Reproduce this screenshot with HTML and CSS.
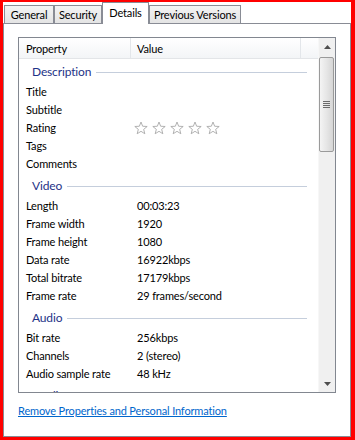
FILE: index.html
```html
<!DOCTYPE html>
<html>
<head>
<meta charset="utf-8">
<link rel="stylesheet" href="styles.css">
</head>
<body>
<div class="frame">
  <div class="tabs">
    <div class="tab t-general">General</div>
    <div class="tab t-security">Security</div>
    <div class="tab t-details active">Details</div>
    <div class="tab t-previous">Previous Versions</div>
  </div>
  <div class="panel">
    <div class="list">
      <div class="content">
        <div class="header">
          <div class="hcol h1">Property</div>
          <div class="hcol h2">Value</div>
          <div class="hcol h3"></div>
        </div>
        <div class="group"><span class="gtitle">Description</span><span class="gline"></span></div>
        <div class="row"><div class="c1">Title</div><div class="c2"></div></div>
        <div class="row"><div class="c1">Subtitle</div><div class="c2"></div></div>
        <div class="row"><div class="c1">Rating</div><div class="c2 stars">
          <svg class="star" viewBox="0 0 14 14"><path d="M7 1 L8.65 5.24 L13.18 5.49 L9.66 8.37 L10.82 12.76 L7 10.3 L3.18 12.76 L4.34 8.37 L0.82 5.49 L5.35 5.24 Z"/></svg>
          <svg class="star" viewBox="0 0 14 14"><path d="M7 1 L8.65 5.24 L13.18 5.49 L9.66 8.37 L10.82 12.76 L7 10.3 L3.18 12.76 L4.34 8.37 L0.82 5.49 L5.35 5.24 Z"/></svg>
          <svg class="star" viewBox="0 0 14 14"><path d="M7 1 L8.65 5.24 L13.18 5.49 L9.66 8.37 L10.82 12.76 L7 10.3 L3.18 12.76 L4.34 8.37 L0.82 5.49 L5.35 5.24 Z"/></svg>
          <svg class="star" viewBox="0 0 14 14"><path d="M7 1 L8.65 5.24 L13.18 5.49 L9.66 8.37 L10.82 12.76 L7 10.3 L3.18 12.76 L4.34 8.37 L0.82 5.49 L5.35 5.24 Z"/></svg>
          <svg class="star" viewBox="0 0 14 14"><path d="M7 1 L8.65 5.24 L13.18 5.49 L9.66 8.37 L10.82 12.76 L7 10.3 L3.18 12.76 L4.34 8.37 L0.82 5.49 L5.35 5.24 Z"/></svg>
        </div></div>
        <div class="row"><div class="c1">Tags</div><div class="c2"></div></div>
        <div class="row"><div class="c1">Comments</div><div class="c2"></div></div>
        <div class="group"><span class="gtitle">Video</span><span class="gline"></span></div>
        <div class="row"><div class="c1">Length</div><div class="c2">00:03:23</div></div>
        <div class="row"><div class="c1">Frame width</div><div class="c2">1920</div></div>
        <div class="row"><div class="c1">Frame height</div><div class="c2">1080</div></div>
        <div class="row"><div class="c1">Data rate</div><div class="c2">16922kbps</div></div>
        <div class="row"><div class="c1">Total bitrate</div><div class="c2">17179kbps</div></div>
        <div class="row"><div class="c1">Frame rate</div><div class="c2">29 frames/second</div></div>
        <div class="group"><span class="gtitle">Audio</span><span class="gline"></span></div>
        <div class="row"><div class="c1">Bit rate</div><div class="c2">256kbps</div></div>
        <div class="row"><div class="c1">Channels</div><div class="c2">2 (stereo)</div></div>
        <div class="row"><div class="c1">Audio sample rate</div><div class="c2">48 kHz</div></div>
        <div class="group"><span class="gtitle">Media</span><span class="gline"></span></div>
      </div>
      <div class="scrollbar">
        <div class="sbtn">
          <svg class="arrow" viewBox="0 0 7 4"><path d="M0 4 L3.5 0 L7 4 Z"/></svg>
        </div>
        <div class="thumb">
          <div class="grip"></div>
        </div>
        <div class="track"></div>
        <div class="sbtn">
          <svg class="arrow" viewBox="0 0 7 4"><path d="M0 0 L7 0 L3.5 4 Z"/></svg>
        </div>
      </div>
    </div>
    <a class="link" href="#">Remove Properties and Personal Information</a>
  </div>
</div>
</body>
</html>
```
FILE: styles.css
```css
html, body {
  margin: 0;
  padding: 0;
  background: #ffffff;
}

body {
  font-family: "Lato", "Liberation Sans", sans-serif;
  font-size: 11px;
  letter-spacing: -0.15px;
  color: #000;
}

.frame {
  width: 355px;
  height: 440px;
  box-sizing: border-box;
  border-style: solid;
  border-color: #ff0000;
  border-width: 2px 4px 3px 3px;
  display: flex;
  flex-direction: column;
  background: #fff;
}

.tabs {
  height: 21px;
  display: flex;
  align-items: flex-end;
  padding-left: 1px;
  position: relative;
  z-index: 2;
}

.tab {
  box-sizing: border-box;
  height: 18px;
  border: 1px solid #898c95;
  border-bottom: none;
  background: linear-gradient(#f3f3f3, #e4e4e4);
  text-align: center;
  line-height: 18px;
  color: #000;
  white-space: nowrap;
}

.t-general { width: 50px; }
.t-security { width: 48px; }
.t-details { width: 47px; }
.t-previous { width: 92px; }

.tab.active {
  height: 22px;
  margin-bottom: -1px;
  background: #fff;
  line-height: 20px;
}

.panel {
  flex: 1;
  border: 1px solid #898c95;
  background: #fff;
  display: flex;
  flex-direction: column;
  align-items: flex-start;
}

.list {
  margin: 13px 0 0 14px;
  width: 318px;
  height: 356px;
  box-sizing: border-box;
  border: 1px solid #828790;
  display: flex;
  overflow: hidden;
}

.content {
  width: 299px;
  overflow: hidden;
}

.header {
  height: 21px;
  display: flex;
  border-bottom: 1px solid #e3e5e8;
  background: linear-gradient(#ffffff, #f3f5f7);
  box-sizing: border-box;
}

.hcol {
  box-sizing: border-box;
  line-height: 22px;
  height: 20px;
}

.h1 {
  width: 112px;
  padding-left: 7px;
  border-right: 1px solid #e3e6ea;
}

.h2 {
  width: 170px;
  padding-left: 6px;
  border-right: 1px solid #e3e6ea;
}

.h3 {
  flex: 1;
}

.group {
  height: 24px;
  box-sizing: border-box;
  padding: 1px 0 0 13px;
  display: flex;
  align-items: center;
}

.gtitle {
  color: #1e3287;
  font-size: 12px;
}

.gline {
  flex: 1;
  height: 1px;
  background: #c5cedc;
  margin: 2px 11px 0 5px;
}

.row {
  height: 18px;
  display: flex;
  align-items: center;
  line-height: 18px;
}

.c1 {
  width: 112px;
  padding-left: 7px;
  box-sizing: border-box;
  white-space: nowrap;
}

.c2 {
  padding-left: 6px;
  white-space: nowrap;
}

.stars {
  display: flex;
  gap: 4px;
  align-items: center;
  padding-left: 3px;
}

.star {
  width: 14px;
  height: 14px;
  fill: #ffffff;
  stroke: #a9a9a9;
  stroke-width: 0.9;
  stroke-linejoin: round;
}

.scrollbar {
  width: 17px;
  display: flex;
  flex-direction: column;
  background: #f0f0f0;
  border-left: 1px solid #f7f7f7;
  box-sizing: border-box;
}

.sbtn {
  height: 17px;
  display: flex;
  align-items: center;
  justify-content: center;
}

.arrow {
  width: 7px;
  height: 4px;
  fill: #4e4e4e;
}

.thumb {
  height: 95px;
  margin: 2px 1px 0 0;
  box-sizing: border-box;
  border: 1px solid #9a9a9a;
  border-radius: 2px;
  background: linear-gradient(to right, #f4f4f4, #e6e6e6 50%, #d6d6d6);
  display: flex;
  align-items: center;
  justify-content: center;
}

.grip {
  width: 7px;
  height: 7px;
  background: repeating-linear-gradient(#6a6a6a 0 1px, transparent 1px 2px);
}

.track {
  flex: 1;
}

.link {
  margin: 10px 0 0 14px;
  color: #0066cc;
  text-decoration: underline;
  line-height: 16px;
  font-size: 11px;
}
```
